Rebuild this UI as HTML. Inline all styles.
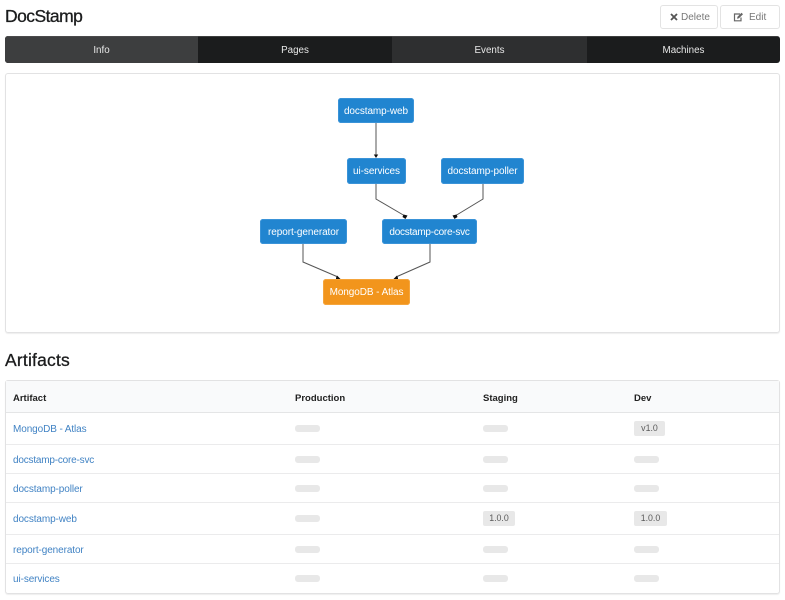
<!DOCTYPE html>
<html lang="en">
<head>
<meta charset="utf-8">
<title>DocStamp</title>
<style>
html,body{margin:0;padding:0;background:#fff;width:785px;height:600px;overflow:hidden}
body{position:relative;font-family:"Liberation Sans",sans-serif;font-size:10px;color:#222}
.a{position:absolute;white-space:nowrap}
.t{position:absolute;top:38px;height:26px;line-height:25px;text-align:center;color:#e8e8e8;font-size:9.8px}
.n{position:absolute;height:25px;line-height:27px;text-align:center;color:#fff;font-size:10px;letter-spacing:-.08px;background:#2185d0;border-radius:3px;box-shadow:inset 0 0 0 1px #3a93d8}
.l{position:absolute;left:13px;color:#4183c4;font-size:10px;letter-spacing:-.1px;line-height:12px;white-space:nowrap}
.p{position:absolute;width:25px;height:7px;background:#e8e8e8;border-radius:3px}
.b{position:absolute;height:14.5px;line-height:15.5px;background:#e8e8e8;border-radius:2px;color:#5a5a5a;font-size:8.8px;text-align:center}
.h{position:absolute;top:393px;font-weight:bold;font-size:9.5px;line-height:12px;color:#222}
.r{position:absolute;left:6px;width:773px;height:1px;background:#ebebec}
.btn{position:absolute;top:5px;height:24px;box-sizing:border-box;background:#fff;border:1px solid #e3e3e3;border-radius:3px;color:#777;font-size:10px;line-height:24px}
</style>
</head>
<body>
<div class="a" style="left:5px;top:5px;font-size:17.5px;letter-spacing:-.55px;line-height:22px;color:#1b1c1d;-webkit-text-stroke:.3px #1b1c1d">DocStamp</div>

<div class="btn" style="left:660px;width:58px;padding-left:9px">
<svg width="8" height="8" viewBox="0 0 8 8" style="position:absolute;left:9px;top:7px"><path d="M1 1L7 7M7 1L1 7" stroke="#555" stroke-width="1.8" fill="none"/></svg>
<span style="position:absolute;left:20px;top:0">Delete</span></div>
<div class="btn" style="left:720px;width:60px">
<svg width="11" height="10" viewBox="0 0 11 10" style="position:absolute;left:12px;top:6px"><path d="M7 2H1.500V8.800H8V5.500" stroke="#666" stroke-width="1.200" fill="none"/><path d="M4 6.800L4.500 4.800L8.500 .8L10 2.200L6 6.200Z" fill="#666"/></svg>
<span style="position:absolute;left:28px;top:0">Edit</span></div>

<div class="a" style="left:5px;top:36px;width:775px;height:27px;border-radius:3px;overflow:hidden;background:#1b1c1d">
<div style="position:absolute;left:0;top:0;width:193px;height:27px;background:#3d3e3f"></div>
<div style="position:absolute;left:387px;top:0;width:195px;height:27px;background:#2e2f30"></div>
<div style="position:absolute;left:0;top:0;width:775px;height:1px;background:#555;opacity:.6"></div>
</div>
<div class="t" style="left:5px;width:193px">Info</div>
<div class="t" style="left:198px;width:194px">Pages</div>
<div class="t" style="left:392px;width:195px">Events</div>
<div class="t" style="left:587px;width:193px">Machines</div>

<div class="a" style="left:5px;top:73px;width:773px;height:258px;border:1px solid #e2e2e3;border-radius:3px;box-shadow:0 1px 1px #eee"></div>

<svg class="a" style="left:0;top:0" width="785" height="340" viewBox="0 0 785 340">
<g fill="none" stroke="#555" stroke-width="1">
<path d="M376 123V155"/>
<path d="M376 184V199L405 216"/>
<path d="M483 184V199L455 216"/>
<path d="M303 244V262L338 277"/>
<path d="M430 244V262L396 277"/>
</g>
<g fill="#111">
<path d="M373.800 154.500H378.200L376 158Z"/>
<path d="M403.500 214.500L407.500 215.500L405.500 219L402.500 217Z"/>
<path d="M456.500 214.500L452.500 215.500L454.500 219L457.500 217Z"/>
<path d="M337 275.500L341 279.500H336L336 278Z"/>
<path d="M397 275.500L393 279.500H398L398 278Z"/>
</g>
</svg>

<div class="n" style="left:338px;top:98px;width:76px">docstamp-web</div>
<div class="n" style="left:347px;top:158px;width:59px;height:26px;line-height:27px">ui-services</div>
<div class="n" style="left:441px;top:158px;width:83px;height:26px;line-height:27px">docstamp-poller</div>
<div class="n" style="left:260px;top:219px;width:87px">report-generator</div>
<div class="n" style="left:382px;top:219px;width:95px;letter-spacing:-.25px">docstamp-core-svc</div>
<div class="n" style="left:323px;top:279px;width:87px;height:26px;line-height:28px;background:#f2951c;box-shadow:inset 0 0 0 1px #f5a53c">MongoDB - Atlas</div>

<div class="a" style="left:5px;top:349px;font-size:17.5px;letter-spacing:.2px;line-height:22px;color:#1b1c1d;-webkit-text-stroke:.3px #1b1c1d">Artifacts</div>

<div class="a" style="left:5px;top:380px;width:773px;height:212px;border:1px solid #e2e2e3;border-radius:3px;box-shadow:0 1px 1px #eee"></div>
<div class="a" style="left:6px;top:381px;width:773px;height:31px;background:#f9fafb"></div>
<div class="r" style="top:412px;background:#e4e5e6"></div>
<div class="r" style="top:444px"></div>
<div class="r" style="top:473px"></div>
<div class="r" style="top:502px"></div>
<div class="r" style="top:534px"></div>
<div class="r" style="top:563px"></div>

<div class="h" style="left:13px">Artifact</div>
<div class="h" style="left:295px">Production</div>
<div class="h" style="left:483px">Staging</div>
<div class="h" style="left:634px">Dev</div>

<a class="l" style="top:424px">MongoDB - Atlas</a>
<a class="l" style="top:455px;letter-spacing:-.2px">docstamp-core-svc</a>
<a class="l" style="top:484px">docstamp-poller</a>
<a class="l" style="top:514px">docstamp-web</a>
<a class="l" style="top:545px">report-generator</a>
<a class="l" style="top:574px">ui-services</a>

<div class="p" style="left:295px;top:425px"></div>
<div class="p" style="left:295px;top:456px"></div>
<div class="p" style="left:295px;top:485px"></div>
<div class="p" style="left:295px;top:515px"></div>
<div class="p" style="left:295px;top:546px"></div>
<div class="p" style="left:295px;top:575px"></div>

<div class="p" style="left:483px;top:425px"></div>
<div class="p" style="left:483px;top:456px"></div>
<div class="p" style="left:483px;top:485px"></div>
<div class="b" style="left:483px;top:511px;width:32px">1.0.0</div>
<div class="p" style="left:483px;top:546px"></div>
<div class="p" style="left:483px;top:575px"></div>

<div class="b" style="left:634px;top:421px;width:31px">v1.0</div>
<div class="p" style="left:634px;top:456px"></div>
<div class="p" style="left:634px;top:485px"></div>
<div class="b" style="left:634px;top:511px;width:33px">1.0.0</div>
<div class="p" style="left:634px;top:546px"></div>
<div class="p" style="left:634px;top:575px"></div>
</body>
</html>
